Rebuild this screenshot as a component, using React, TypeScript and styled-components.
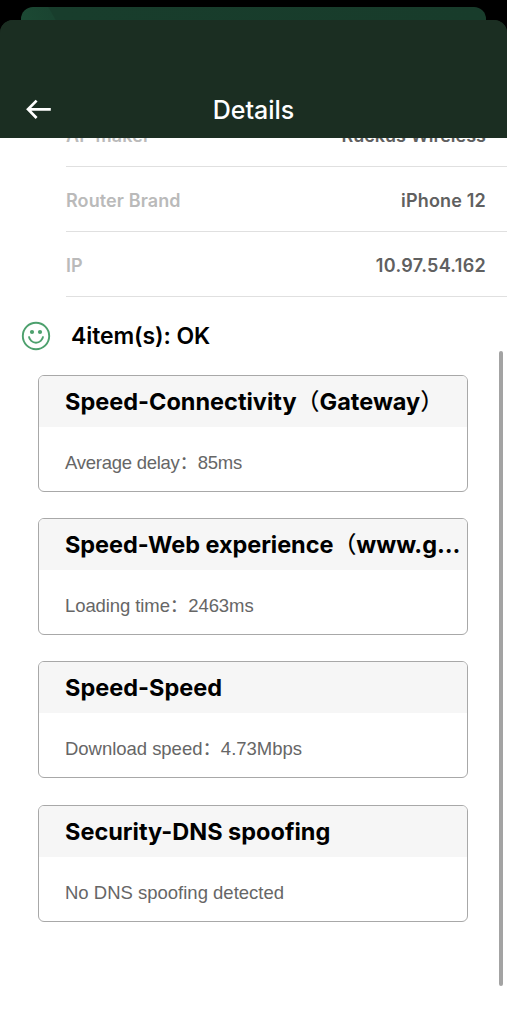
import React from 'react';
import styled, { createGlobalStyle } from 'styled-components';

const GlobalStyle = createGlobalStyle`
  * { box-sizing: border-box; }
  body { margin: 0; background: #000; }
`;

const Screen = styled.div`
  width: 507px;
  height: 1024px;
  display: flex;
  flex-direction: column;
  overflow: hidden;
  background: #000;
  font-family: Inter, 'Noto Sans CJK SC', sans-serif;
`;

const BackSheet = styled.div`
  flex: none;
  height: 26px;
  margin: 7px 21px -13px;
  border-radius: 12px 12px 0 0;
  overflow: hidden;
  background: linear-gradient(60deg, #1c4a34 0, #1a4431 36px, #183d2c 37px, #183c2b 100%);
`;

const Sheet = styled.main`
  flex: 1;
  min-height: 0;
  display: flex;
  flex-direction: column;
  position: relative;
  overflow: hidden;
  border-radius: 13px 13px 0 0;
  background: #1b2e22;
`;

const Header = styled.header`
  flex: none;
  height: 118px;
  padding: 62px 25px 0;
  display: grid;
  grid-template-columns: 28px 1fr 28px;
  align-items: center;
  position: relative;
  z-index: 1;
  background: #1b2e22;
  color: #fff;
`;

const Title = styled.h1`
  margin: 0;
  text-align: center;
  font-size: 25px;
  font-weight: 500;
  letter-spacing: 0;
  line-height: 56px;
`;

const Content = styled.div`
  flex: 1;
  margin-top: -36px;
  background: #fff;
`;

const InfoRow = styled.div`
  height: 65px;
  margin-left: 66px;
  padding-right: 21px;
  display: flex;
  align-items: center;
  justify-content: space-between;
  border-bottom: 1px solid #e0e0e0;
  font-size: 18px;
  padding-top: 3px;
`;

const Label = styled.span`
  color: #bababa;
  font-weight: 600;
  letter-spacing: 0.1px;
`;

const Value = styled.span<{ $tracking?: number }>`
  color: #606060;
  font-weight: 600;
  letter-spacing: ${(p) => p.$tracking ?? 0}px;
`;

const Summary = styled.div`
  height: 78px;
  padding-left: 21px;
  display: flex;
  align-items: center;
  gap: 20px;
`;

const SummaryText = styled.h2`
  margin: 0;
  font-size: 23px;
  font-weight: 600;
  letter-spacing: -0.1px;
  color: #000;
`;

const Cards = styled.div`
  display: grid;
  gap: 26.2px;
  margin: 0 39px 0 38px;
`;

const Card = styled.section`
  height: 117px;
  border: 1px solid #a8a8a8;
  border-radius: 6px;
  overflow: hidden;
`;

const CardTitle = styled.h3<{ $tracking?: number }>`
  height: 51px;
  margin: 0;
  padding: 0 6px 0 26px;
  background: #f6f6f6;
  color: #000;
  font-size: 23.5px;
  font-weight: 700;
  letter-spacing: ${(p) => p.$tracking ?? 0}px;
  line-height: 51px;
  white-space: nowrap;
  overflow: hidden;
`;

const Paren = styled.span`
  display: inline-block;
  font-family: 'Noto Sans CJK SC', sans-serif;
  font-size: 23px;
  font-weight: 500;
  line-height: 1;
`;

const CardBody = styled.p<{ $tracking?: number }>`
  margin: 0;
  padding-left: 26px;
  color: #666;
  font: 18.5px/71px 'Liberation Sans', 'Noto Sans CJK SC', sans-serif;
  letter-spacing: ${(p) => p.$tracking ?? 0}px;
`;

const ScrollThumb = styled.div`
  position: absolute;
  right: 4px;
  top: 331px;
  width: 4px;
  height: 635px;
  border-radius: 2px;
  background: #a3a3a3;
`;

const info = [
  { label: 'AP maker', value: 'Ruckus Wireless', tracking: 0 },
  { label: 'Router Brand', value: 'iPhone 12', tracking: 0.18 },
  { label: 'IP', value: '10.97.54.162', tracking: 0.3 },
];

const results = [
  {
    title: <>Speed-Connectivity<Paren>（</Paren>Gateway<Paren>）</Paren></>,
    body: 'Average delay：85ms',
    bodyTracking: -0.26,
  },
  {
    title: <>Speed-Web experience<Paren>（</Paren>www.g...</>,
    titleTracking: -0.06,
    body: 'Loading time：2463ms',
    bodyTracking: -0.09,
  },
  { title: 'Speed-Speed', body: 'Download speed：4.73Mbps', bodyTracking: -0.03 },
  { title: 'Security-DNS spoofing', body: 'No DNS spoofing detected' },
];

export default function App() {
  return (
    <Screen>
      <GlobalStyle />
      <BackSheet />
      <Sheet>
        <Header>
          <svg width="28" height="24" viewBox="0 0 28 24" fill="none" stroke="#fff" strokeWidth="2.7">
            <path d="M25.8 11.3H3M11.6 2.6L3 11.3L11.6 20" />
          </svg>
          <Title>Details</Title>
        </Header>
        <Content>
          {info.map((r) => (
            <InfoRow key={r.label}>
              <Label>{r.label}</Label>
              <Value $tracking={r.tracking}>{r.value}</Value>
            </InfoRow>
          ))}
          <Summary>
            <svg width="30" height="30" viewBox="0 0 30 30" fill="none" stroke="#4da06d" strokeWidth="1.9">
              <circle cx="15" cy="15" r="13.2" />
              <path d="M7.9 15.4a7.15 7.15 0 0 0 14.2 0" />
              <circle cx="11" cy="11" r="2.1" fill="#4da06d" stroke="none" />
              <circle cx="19" cy="11" r="2.1" fill="#4da06d" stroke="none" />
            </svg>
            <SummaryText>4item(s): OK</SummaryText>
          </Summary>
          <Cards>
            {results.map((r) => (
              <Card key={r.body}>
                <CardTitle $tracking={r.titleTracking}>{r.title}</CardTitle>
                <CardBody $tracking={r.bodyTracking}>{r.body}</CardBody>
              </Card>
            ))}
          </Cards>
        </Content>
        <ScrollThumb />
      </Sheet>
    </Screen>
  );
}
